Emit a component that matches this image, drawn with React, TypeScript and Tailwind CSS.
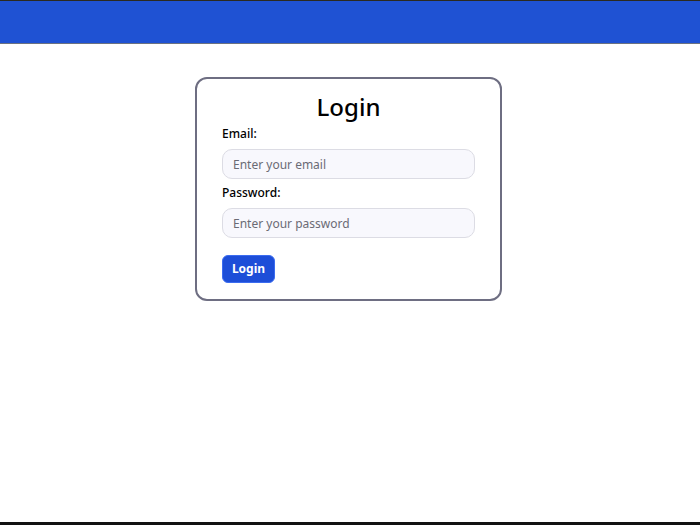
import React from "react";

export default function App() {
  return (
    <div
      className="h-[525px] w-[700px] bg-white flex flex-col border-t border-b-[3px] border-t-[#2b2a20] border-b-[#111]"
      style={{ fontFamily: '"Noto Sans", "Open Sans", sans-serif' }}
    >
      <div className="h-[43px] bg-[#1f52d3] border-b border-[#6b7280] shrink-0" />
      <div className="flex justify-center pt-[33px] pr-[3px]">
        <div className="w-[307px] border-2 border-[#6e6e82] rounded-[12px] px-[25px] pt-[12px] pb-[16px] flex flex-col">
          <h1 className="text-[24px] leading-[32px] text-center text-black font-medium">Login</h1>
          <label className="mt-[3px] text-[12px] leading-[16px] font-medium text-black">Email:</label>
          <input
            className="mt-[7px] h-[30px] w-full rounded-[10px] border border-[#dcdce4] bg-[#f8f8fd] px-[10px] text-[12px] text-[#333] placeholder:text-[#6b6b75] outline-none"
            placeholder="Enter your email"
          />
          <label className="mt-[6px] text-[12px] leading-[16px] font-medium text-black">Password:</label>
          <input
            type="password"
            className="mt-[7px] h-[30px] w-full rounded-[10px] border border-[#dcdce4] bg-[#f8f8fd] px-[10px] text-[12px] text-[#333] placeholder:text-[#6b6b75] outline-none"
            placeholder="Enter your password"
          />
          <div className="mt-[17px]">
            <button className="h-[28px] w-[53px] rounded-[6px] bg-[#1d4ed8] border border-[#3b6cf0] text-white text-[12px] font-bold">
              Login
            </button>
          </div>
        </div>
      </div>
    </div>
  );
}
